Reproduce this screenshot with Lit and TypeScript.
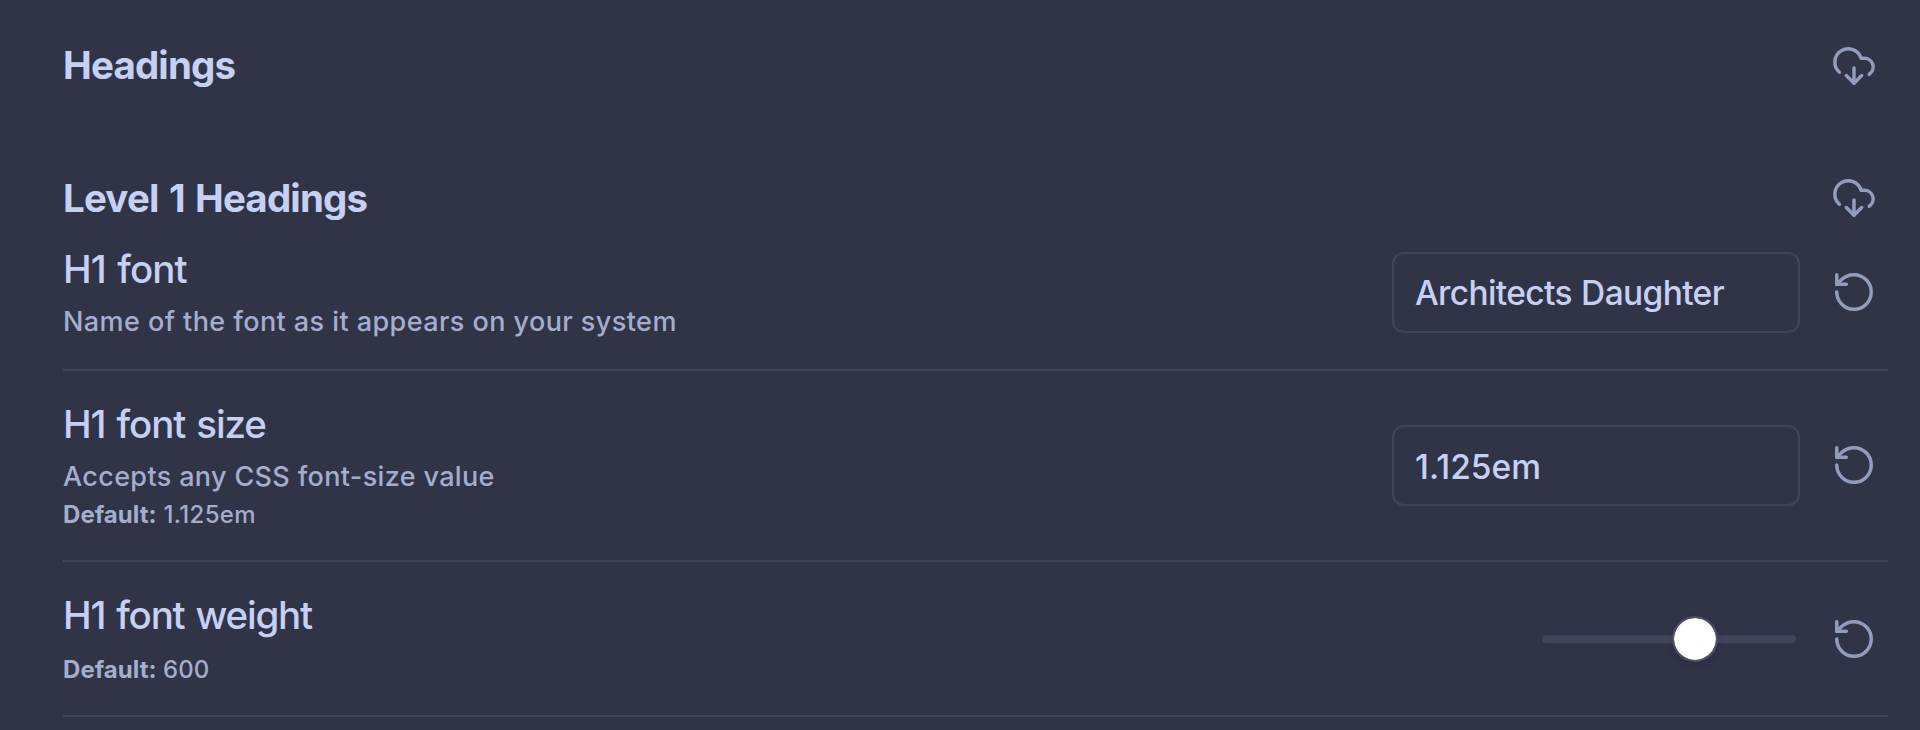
import { LitElement, html, css, svg, nothing } from "lit";
import { customElement, property } from "lit/decorators.js";
import { styleMap } from "lit/directives/style-map.js";

const paths = {
  download: svg`
    <path d="M12 13v8l-4-4"></path>
    <path d="m12 21 4-4"></path>
    <path d="M4.393 15.269A7 7 0 1 1 15.71 8h1.79a4.5 4.5 0 0 1 2.436 8.284"></path>`,
  reset: svg`
    <path d="M3 12a9 9 0 1 0 9-9 9.75 9.75 0 0 0-6.74 2.74L3 8"></path>
    <path d="M3 3v5h5"></path>`,
};

@customElement("icon-button")
class IconButton extends LitElement {
  @property() icon: keyof typeof paths = "reset";

  static styles = css`
    :host {
      display: block;
      flex: none;
      width: 46px;
      height: 46px;
      margin-right: 11px;
    }
    .icon {
      display: block;
      width: 46px;
      height: 46px;
      fill: none;
      stroke: #949cbb;
      stroke-width: 1.8;
      stroke-linecap: round;
      stroke-linejoin: round;
    }
  `;

  render() {
    return html`<svg class="icon" viewBox="0 0 24 24">${paths[this.icon]}</svg>`;
  }
}

@customElement("weight-slider")
class WeightSlider extends LitElement {
  @property({ type: Number }) value = 600;
  @property({ type: Number }) min = 100;
  @property({ type: Number }) max = 900;

  static styles = css`
    :host {
      display: block;
      margin-right: 4px;
    }
    .track {
      position: relative;
      width: 254px;
      height: 8px;
      border-radius: 4px;
      background: #414559;
    }
    .thumb {
      position: absolute;
      box-sizing: border-box;
      top: -19px;
      width: 46px;
      height: 46px;
      border: 2px solid #4b5066;
      border-radius: 50%;
      background: #fff;
      background-clip: padding-box;
      box-shadow: 0 3px 6px rgba(20, 22, 40, 0.2);
    }
  `;

  render() {
    const ratio = (this.value - this.min) / (this.max - this.min);
    return html`
      <div class="track">
        <div class="thumb" style=${styleMap({ left: `calc((100% - 46px) * ${ratio})` })}></div>
      </div>
    `;
  }
}

interface Setting {
  key: string;
  name: string;
  description?: string;
  fallback?: string;
  value: string | number;
}

const settings: Setting[] = [
  {
    key: "font",
    name: "H1 font",
    description: "Name of the font as it appears on your system",
    value: "Architects Daughter",
  },
  {
    key: "size",
    name: "H1 font size",
    description: "Accepts any CSS font-size value",
    fallback: "1.125em",
    value: "1.125em",
  },
  { key: "weight", name: "H1 font weight", fallback: "600", value: 600 },
];

@customElement("app-root")
class AppRoot extends LitElement {
  static styles = css`
    :host {
      display: block;
      box-sizing: border-box;
      height: 730px;
      overflow: hidden;
      padding: 41px 32px 0 63px;
      background: #303446;
      color: #c6d0f5;
      font-family: Inter, "Liberation Sans", sans-serif;
      font-weight: 450;
    }
    .heading {
      display: flex;
      align-items: center;
      justify-content: space-between;
      height: 48px;
      font-size: 38.5px;
      font-weight: 700;
      line-height: 48px;
      letter-spacing: -0.83px;
      word-spacing: 2px;
    }
    .heading icon-button {
      margin-top: 1px;
    }
    .heading.sub {
      margin-top: 85px;
    }
    .heading.sub icon-button {
      margin-top: -1px;
    }
    .item {
      display: flex;
      align-items: center;
      justify-content: space-between;
      padding: 29px 0 30px;
      border-bottom: 2px solid #414559;
    }
    .item.font {
      padding: 23px 0 29px;
    }
    .name {
      font-size: 38.5px;
      line-height: 48px;
      word-spacing: 2px;
    }
    .font .name {
      letter-spacing: -0.88px;
    }
    .size .name {
      letter-spacing: -1.12px;
    }
    .weight .name {
      letter-spacing: -1.22px;
    }
    .description {
      margin-top: 10px;
      color: #a5adce;
      font-size: 27px;
      line-height: 38px;
      letter-spacing: 0.43px;
    }
    .font .description {
      margin-bottom: -1px;
    }
    .default {
      margin: 3px 0 -1px;
      color: #a5adce;
      font-size: 24px;
      line-height: 32px;
      letter-spacing: 0.35px;
    }
    .size .description {
      letter-spacing: 0.35px;
    }
    .weight .default {
      margin-top: 15px;
      letter-spacing: 0;
    }
    .label {
      font-weight: 700;
      letter-spacing: 0.05px;
    }
    .controls {
      display: flex;
      align-items: center;
      gap: 31px;
    }
    .font icon-button {
      margin-top: -1px;
    }
    .weight .controls {
      margin-top: 2px;
    }
    .input {
      box-sizing: border-box;
      width: 408px;
      height: 81px;
      margin: 1px 0 0;
      padding: 2px 21px 0;
      border: 2px solid #414559;
      border-radius: 12px;
      outline: none;
      background: transparent;
      color: inherit;
      font: 450 33.5px Inter, "Liberation Sans", sans-serif;
      letter-spacing: 0.05px;
    }
    .font .input {
      margin-top: -1px;
      letter-spacing: -0.64px;
      word-spacing: 1px;
    }
  `;

  private control(setting: Setting) {
    return typeof setting.value === "number"
      ? html`<weight-slider .value=${setting.value}></weight-slider>`
      : html`<input class="input" type="text" spellcheck="false" .value=${setting.value} />`;
  }

  private item(setting: Setting) {
    return html`
      <div class="item ${setting.key}">
        <div class="info">
          <div class="name">${setting.name}</div>
          ${setting.description ? html`<div class="description">${setting.description}</div>` : nothing}
          ${setting.fallback
            ? html`<div class="default"><span class="label">Default:</span> ${setting.fallback}</div>`
            : nothing}
        </div>
        <div class="controls">${this.control(setting)}<icon-button icon="reset"></icon-button></div>
      </div>
    `;
  }

  render() {
    return html`
      <div class="heading"><span>Headings</span><icon-button icon="download"></icon-button></div>
      <div class="heading sub"><span>Level 1 Headings</span><icon-button icon="download"></icon-button></div>
      ${settings.map((setting) => this.item(setting))}
    `;
  }
}
